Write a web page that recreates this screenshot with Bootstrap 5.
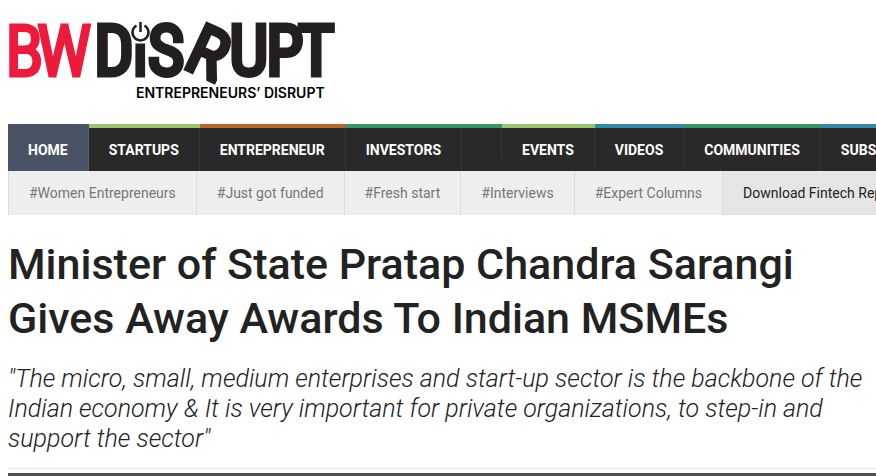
<!DOCTYPE html>
<html lang="en">
<head>
<meta charset="utf-8">
<meta name="viewport" content="width=device-width, initial-scale=1">
<title>Minister of State Pratap Chandra Sarangi Gives Away Awards To Indian MSMEs</title>
<link href="https://cdn.jsdelivr.net/npm/bootstrap@5.3.0/dist/css/bootstrap.min.css" rel="stylesheet">
<style>
body { font-family: Roboto, "Liberation Sans", sans-serif; color: #222; background: #fff; overflow-x: hidden; }
.site-logo { width: 328px; height: 84px; overflow: visible; }
.logo-word { font-family: "Roboto Condensed", sans-serif; font-size: 66px; font-weight: 300; fill: #231f20; stroke: #231f20; stroke-width: 7px; }
.logo-red { font-size: 68px; fill: #ed1a3b; stroke: #ed1a3b; stroke-width: 5px; }
.logo-i { font-size: 50px; }
.logo-tag { font-family: Inter, sans-serif; font-size: 14px; font-weight: 600; fill: #000; }
.bar-wrap { overflow: hidden; }
.main-bar { background: #292929; font-size: 14px; font-weight: 700; }
.main-bar .nav-item { border-top: 4px solid #379668; flex: none; }
.main-bar .nav-link { color: #fff; line-height: 19px; padding: 13px 20px 11px; border-right: 1px solid #363636; }
.main-bar .tone-home { background: #4a5366; border-color: #4a5366; }
.main-bar .tone-home .nav-link { border-color: #56617a; }
.main-bar .tone-lime { border-color: #9bc668; }
.main-bar .tone-rust { border-color: #bd632b; }
.main-bar .tone-blue { border-color: #2f8ab0; }
.spacer-tab { display: block; width: 40px; height: 28px; border-right: 1px solid #363636; }
.tag-bar { background: #eee; font-size: 14px; }
.tag-bar .nav-item { flex: none; border-left: 1px solid #dcdcdc; }
.tag-bar .nav-link { color: #777; line-height: 20px; padding: 12px 20px; }
.tag-bar .tag-report { background: #e5e5e5; }
.tag-bar .tag-report .nav-link { color: #222; }
.headline { font-size: 43px; line-height: 54px; font-weight: 500; padding-top: 22px; }
.standfirst { font-size: 25px; line-height: 30px; font-weight: 300; font-style: italic; padding-top: 19px; }
.rule-thin { border-top: 1px solid #e5e5e5; margin-top: 14px; }
.rule-thick { border-top: 3px solid #4f4f4f; margin-top: 4px; }
</style>
<script src="https://cdn.jsdelivr.net/npm/bootstrap@5.3.0/dist/js/bootstrap.bundle.min.js"></script>
</head>
<body>
<div class="ps-2">
  <header class="pt-3 pb-4">
    <a href="#" class="d-block" aria-label="BW Disrupt">
      <svg class="site-logo d-block" viewBox="8 16 328 84">
        <g class="logo-word">
          <text class="logo-red" x="6 38" y="75">BW</text>
          <text x="95" y="74">D</text>
          <text class="logo-i" x="135" y="74">ı</text>
          <text x="149" y="74">S</text>
          <text transform="translate(183 66) rotate(25)">R</text>
          <text x="230 267 299" y="74">UPT</text>
        </g>
        <path d="M136.500 25.500A8 8 0 1 0 144.500 25.500M140.500 22V32" fill="none" stroke="#231f20" stroke-width="2.500"/>
        <text class="logo-tag" x="136" y="98">ENTREPRENEURS’ DISRUPT</text>
      </svg>
    </a>
  </header>
  <nav class="bar-wrap" aria-label="Sections">
    <ul class="main-bar nav flex-nowrap text-nowrap">
      <li class="nav-item tone-home"><a class="nav-link" href="#">HOME</a></li>
      <li class="nav-item tone-lime"><a class="nav-link" href="#">STARTUPS</a></li>
      <li class="nav-item tone-rust"><a class="nav-link" href="#">ENTREPRENEUR</a></li>
      <li class="nav-item"><a class="nav-link" href="#">INVESTORS</a></li>
      <li class="nav-item"><span class="spacer-tab"></span></li>
      <li class="nav-item tone-lime"><a class="nav-link" href="#">EVENTS</a></li>
      <li class="nav-item tone-blue"><a class="nav-link" href="#">VIDEOS</a></li>
      <li class="nav-item"><a class="nav-link" href="#">COMMUNITIES</a></li>
      <li class="nav-item tone-blue"><a class="nav-link" href="#">SUBSCRIBE</a></li>
    </ul>
    <ul class="tag-bar nav flex-nowrap text-nowrap">
      <li class="nav-item"><a class="nav-link" href="#">#Women Entrepreneurs</a></li>
      <li class="nav-item"><a class="nav-link" href="#">#Just got funded</a></li>
      <li class="nav-item"><a class="nav-link" href="#">#Fresh start</a></li>
      <li class="nav-item"><a class="nav-link" href="#">#Interviews</a></li>
      <li class="nav-item"><a class="nav-link" href="#">#Expert Columns</a></li>
      <li class="nav-item tag-report"><a class="nav-link" href="#">Download Fintech Report</a></li>
    </ul>
  </nav>
  <main>
    <h1 class="headline mb-0">Minister of State Pratap Chandra Sarangi<br>Gives Away Awards To Indian MSMEs</h1>
    <p class="standfirst mb-0">"The micro, small, medium enterprises and start-up sector is the backbone of the<br>Indian economy &amp; It is very important for private organizations, to step-in and<br>support the sector"</p>
    <div class="rule-thin"></div>
    <div class="rule-thick"></div>
  </main>
</div>
</body>
</html>
